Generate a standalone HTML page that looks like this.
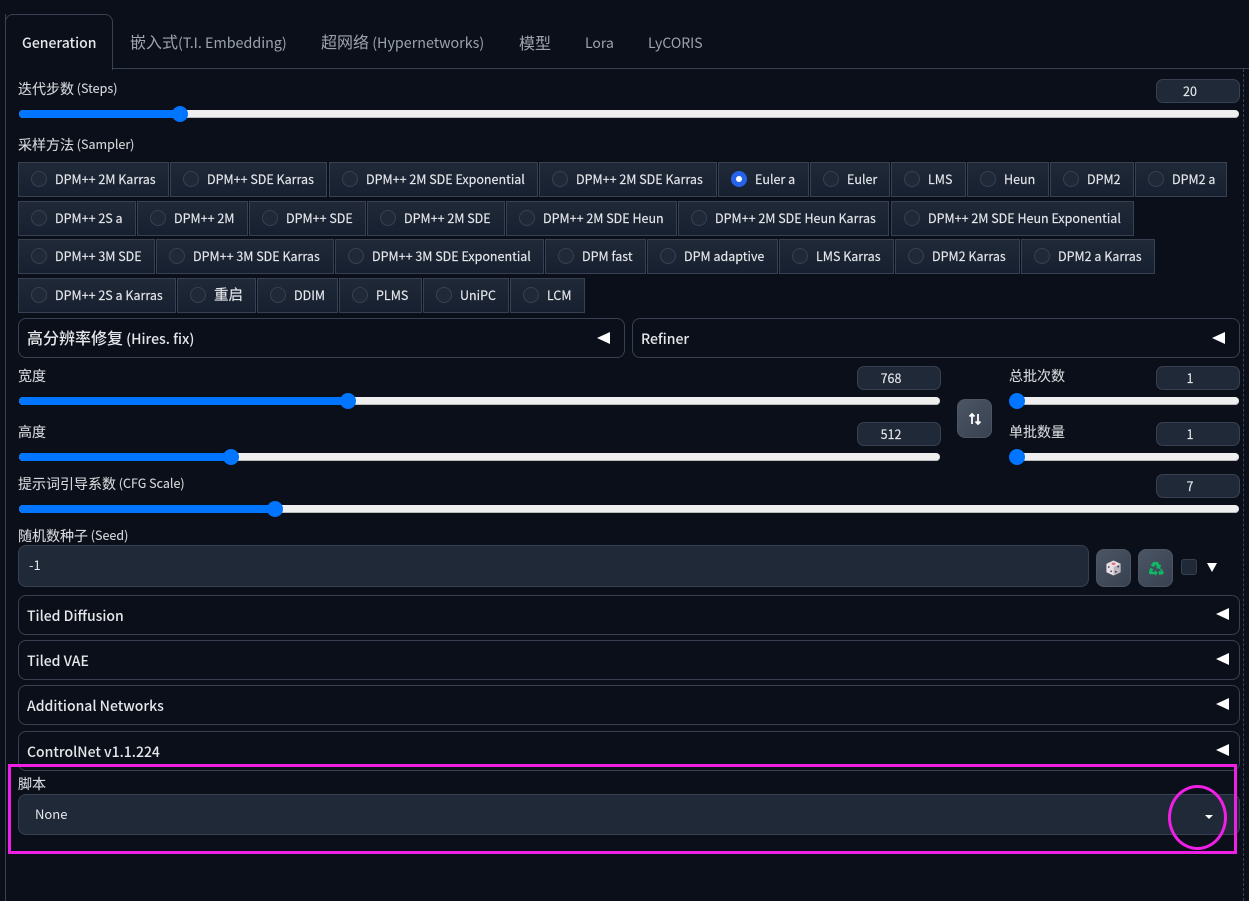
<!DOCTYPE html>
<html lang="zh"><head><meta charset="utf-8"><title>Generation</title>
<style>
html,body{margin:0;padding:0;width:1249px;height:901px;overflow:hidden;background:#0b0f19}
body{position:relative;font-family:"Noto Sans CJK SC","Liberation Sans",sans-serif;color:#e5e7eb}
.a,.a *{box-sizing:border-box}
.a{position:absolute;white-space:nowrap}
.tab{font-size:14px;line-height:20px;top:33px;color:#9ca3af}
.tab u{text-decoration:none;font-size:16px}
.tab em{font-style:normal;font-size:14.3px}
.lb{font-size:12.5px;line-height:18px;color:#d6d8dc;-webkit-text-stroke:.1px #d6d8dc}
.lb u{text-decoration:none;font-size:14px;position:relative;top:1px}
.tr{height:8px;background:#efefef;border-radius:4px;box-shadow:inset 0 -1px 0 #bbb}
.fl{height:8px;background:#0075ff;border-radius:4px 0 0 4px}
.th{width:16px;height:16px;border-radius:50%;background:#0075ff}
.n{height:24px;background:#1f2937;border:1px solid #374151;border-radius:7px;text-align:center;font-size:12.5px;line-height:22px;color:#e5e7eb;padding-right:16px;-webkit-text-stroke:.15px #e5e7eb}
.r{height:35px;background:linear-gradient(#1f2937,#172030);border:1px solid #374151;font-size:12.5px;line-height:31px;color:#e5e7eb;padding-left:36px;-webkit-text-stroke:.15px #e5e7eb}
.r u{text-decoration:none;font-size:14.5px}
.r i{position:absolute;left:12px;top:8px;width:16px;height:16px;border-radius:50%;background:#1f2937;border:1px solid #374151}
.acc{height:40px;border:1px solid #374151;border-radius:8px;font-size:14px;line-height:40px;padding-left:8px;font-weight:500;color:#e5e7eb}
.acc u{text-decoration:none;font-size:16px;font-weight:500}
.ar{width:0;height:0;border-top:6px solid transparent;border-bottom:6px solid transparent;border-right:13px solid #fff}
.ib{width:35px;height:38px;background:linear-gradient(135deg,#4b5563,#374151);border:1px solid #4b5563;border-radius:8px}
</style></head><body>

<div class="a" style="left:5px;top:14px;width:1px;height:887px;background:#374151"></div>
<div class="a" style="left:113px;top:68px;width:1136px;height:1px;background:#374151"></div>
<div class="a" style="left:5px;top:14px;width:108px;height:56px;border:1px solid #374151;border-bottom:none;border-radius:8px 8px 0 0;background:#0b0f19"></div>
<div class="a tab" style="left:22px;color:#e5e7eb;font-weight:500">Generation</div>
<div class="a tab" style="left:130px;top:31px"><u>嵌入式</u><em>(T.I. Embedding)</em></div>
<div class="a tab" style="left:321px;top:31px"><u>超网络</u><em> (Hypernetworks)</em></div>
<div class="a tab" style="left:519px;top:32px"><u>模型</u></div>
<div class="a tab" style="left:585px">Lora</div>
<div class="a tab" style="left:648px">LyCORIS</div>
<div class="a" style="left:1243px;top:69px;width:0;height:832px;border-left:1px dashed #374151"></div>

<div class="a lb" style="left:18px;top:79px"><u>迭代步数</u> (Steps)</div>
<div class="a n" style="left:1156px;top:79px;width:84px">20</div>
<div class="a tr" style="left:19px;top:110px;width:1220px"></div>
<div class="a fl" style="left:19px;top:110px;width:161px"></div>
<div class="a th" style="left:172px;top:106px"></div>

<div class="a lb" style="left:18px;top:135px"><u>采样方法</u> (Sampler)</div>

<div class="a r" style="left:18px;top:162px;width:151px"><i></i>DPM++ 2M Karras</div>
<div class="a r" style="left:170px;top:162px;width:157px"><i></i>DPM++ SDE Karras</div>
<div class="a r" style="left:329px;top:162px;width:209px"><i></i>DPM++ 2M SDE Exponential</div>
<div class="a r" style="left:539px;top:162px;width:178px"><i></i>DPM++ 2M SDE Karras</div>
<div class="a r" style="left:718px;top:162px;width:91px"><i style="background:#2563eb;border-color:#2563eb"></i><b style="position:absolute;left:17px;top:13px;width:6px;height:6px;border-radius:50%;background:#fff"></b>Euler a</div>
<div class="a r" style="left:810px;top:162px;width:80px"><i></i>Euler</div>
<div class="a r" style="left:891px;top:162px;width:75px"><i></i>LMS</div>
<div class="a r" style="left:967px;top:162px;width:82px"><i></i>Heun</div>
<div class="a r" style="left:1050px;top:162px;width:84px"><i></i>DPM2</div>
<div class="a r" style="left:1135px;top:162px;width:92px"><i></i>DPM2 a</div>

<div class="a r" style="left:18px;top:201px;width:118px"><i></i>DPM++ 2S a</div>
<div class="a r" style="left:137px;top:201px;width:111px"><i></i>DPM++ 2M</div>
<div class="a r" style="left:249px;top:201px;width:117px"><i></i>DPM++ SDE</div>
<div class="a r" style="left:367px;top:201px;width:138px"><i></i>DPM++ 2M SDE</div>
<div class="a r" style="left:506px;top:201px;width:171px"><i></i>DPM++ 2M SDE Heun</div>
<div class="a r" style="left:678px;top:201px;width:211px"><i></i>DPM++ 2M SDE Heun Karras</div>
<div class="a r" style="left:891px;top:201px;width:243px"><i></i>DPM++ 2M SDE Heun Exponential</div>

<div class="a r" style="left:18px;top:239px;width:137px"><i></i>DPM++ 3M SDE</div>
<div class="a r" style="left:156px;top:239px;width:178px"><i></i>DPM++ 3M SDE Karras</div>
<div class="a r" style="left:335px;top:239px;width:209px"><i></i>DPM++ 3M SDE Exponential</div>
<div class="a r" style="left:545px;top:239px;width:101px"><i></i>DPM fast</div>
<div class="a r" style="left:647px;top:239px;width:131px"><i></i>DPM adaptive</div>
<div class="a r" style="left:779px;top:239px;width:115px"><i></i>LMS Karras</div>
<div class="a r" style="left:895px;top:239px;width:125px"><i></i>DPM2 Karras</div>
<div class="a r" style="left:1021px;top:239px;width:134px"><i></i>DPM2 a Karras</div>

<div class="a r" style="left:18px;top:278px;width:158px"><i></i>DPM++ 2S a Karras</div>
<div class="a r" style="left:177px;top:278px;width:79px"><i></i><u>重启</u></div>
<div class="a r" style="left:257px;top:278px;width:81px"><i></i>DDIM</div>
<div class="a r" style="left:339px;top:278px;width:83px"><i></i>PLMS</div>
<div class="a r" style="left:423px;top:278px;width:86px"><i></i>UniPC</div>
<div class="a r" style="left:510px;top:278px;width:75px"><i></i>LCM</div>

<div class="a acc" style="left:18px;top:318px;width:607px;line-height:36px"><u>高分辨率修复</u> (Hires. fix)</div>
<div class="a ar" style="left:597px;top:332px"></div>
<div class="a acc" style="left:632px;top:318px;width:608px">Refiner</div>
<div class="a ar" style="left:1212px;top:332px"></div>

<div class="a lb" style="left:18px;top:366px"><u>宽度</u></div>
<div class="a n" style="left:857px;top:366px;width:84px">768</div>
<div class="a tr" style="left:19px;top:397px;width:921px"></div>
<div class="a fl" style="left:19px;top:397px;width:329px"></div>
<div class="a th" style="left:340px;top:393px"></div>

<div class="a lb" style="left:18px;top:422px"><u>高度</u></div>
<div class="a n" style="left:857px;top:422px;width:84px">512</div>
<div class="a tr" style="left:19px;top:453px;width:921px"></div>
<div class="a fl" style="left:19px;top:453px;width:212px"></div>
<div class="a th" style="left:223px;top:449px"></div>

<div class="a ib" style="left:957px;top:399px;height:39px"></div>
<svg class="a" style="left:968px;top:412px" width="14" height="14" viewBox="0 0 14 14"><path d="M4 12V2M1.500 4.500 4 2l2.500 2.500M10 2v10M7.500 9.500 10 12l2.500-2.500" fill="none" stroke="#fff" stroke-width="1.800"/></svg>

<div class="a lb" style="left:1009px;top:366px"><u>总批次数</u></div>
<div class="a n" style="left:1156px;top:366px;width:84px">1</div>
<div class="a tr" style="left:1010px;top:397px;width:229px"></div>
<div class="a th" style="left:1009px;top:393px"></div>

<div class="a lb" style="left:1009px;top:422px"><u>单批数量</u></div>
<div class="a n" style="left:1156px;top:422px;width:84px">1</div>
<div class="a tr" style="left:1010px;top:453px;width:229px"></div>
<div class="a th" style="left:1009px;top:449px"></div>

<div class="a lb" style="left:18px;top:474px"><u>提示词引导系数</u> (CFG Scale)</div>
<div class="a n" style="left:1156px;top:474px;width:84px">7</div>
<div class="a tr" style="left:19px;top:505px;width:1220px"></div>
<div class="a fl" style="left:19px;top:505px;width:256px"></div>
<div class="a th" style="left:267px;top:501px"></div>

<div class="a lb" style="left:18px;top:526px"><u>随机数种子</u> (Seed)</div>
<div class="a" style="left:18px;top:545px;width:1071px;height:42px;background:#1f2937;border:1px solid #374151;border-radius:8px;font-size:13px;line-height:38px;padding-left:10px">-1</div>
<div class="a ib" style="left:1096px;top:549px"></div>
<svg class="a" style="left:1105px;top:559px" width="17" height="18" viewBox="0 0 18 18"><path d="M9 1l7.500 3.500v9L9 17l-7.500-3.500v-9z" fill="#e6e0e6"/><path d="M9 8l7.500-3.500v9L9 17z" fill="#bdb5c0"/><ellipse cx="9" cy="4.500" rx="2" ry="1.200" fill="#e8606a"/><circle cx="4" cy="8" r="1" fill="#5b5468"/><circle cx="6.500" cy="12.500" r="1" fill="#5b5468"/><circle cx="14" cy="7.500" r="1" fill="#3f3a4c"/><circle cx="11.500" cy="13" r="1" fill="#3f3a4c"/></svg>
<div class="a ib" style="left:1138px;top:549px"></div>
<svg class="a" style="left:1148px;top:561px" width="16" height="15" viewBox="0 0 18 17"><path d="M6 1h5l2.500 4 1.500-1-1.500 5-5-1 1.500-1L8.500 4 6.500 7 3 5zM2.500 7.500 6 9.500 4.500 12H8v-2l3 3.500L8 17v-2H3c-1.500 0-2.500-1.500-2-3zM15 8.500l2.500 4c.5 1.500-.5 3-2 3H12v-4h3.500L13 9.500z" fill="#0fb866"/></svg>
<div class="a" style="left:1181px;top:559px;width:16px;height:16px;background:#1f2937;border:1px solid #374151;border-radius:3px"></div>
<div class="a" style="left:1207px;top:563px;width:0;height:0;border-left:5.500px solid transparent;border-right:5.500px solid transparent;border-top:9px solid #fff"></div>

<div class="a acc" style="left:18px;top:595px;width:1222px">Tiled Diffusion</div>
<div class="a ar" style="left:1216px;top:608px"></div>
<div class="a acc" style="left:18px;top:640px;width:1222px">Tiled VAE</div>
<div class="a ar" style="left:1216px;top:653px"></div>
<div class="a acc" style="left:18px;top:685px;width:1222px">Additional Networks</div>
<div class="a ar" style="left:1216px;top:698px"></div>
<div class="a acc" style="left:18px;top:731px;width:1222px">ControlNet v1.1.224</div>
<div class="a ar" style="left:1216px;top:744px"></div>

<div class="a lb" style="left:18px;top:774px;background:transparent"><u>脚本</u></div>
<div class="a" style="left:18px;top:794px;width:1222px;height:41px;background:#1f2937;border:1px solid #374151;border-radius:8px;font-size:13px;line-height:37px;padding-left:16px">None</div>
<div class="a" style="left:1205px;top:815px;width:0;height:0;border-left:4px solid transparent;border-right:4px solid transparent;border-top:4px solid #fff"></div>

<div class="a" style="left:8px;top:764px;width:1229px;height:90px;border:3px solid #f01fe6"></div>
<div class="a" style="left:1168px;top:785px;width:59px;height:65px;border:3px solid #f01fe6;border-radius:50%"></div>
</body></html>
